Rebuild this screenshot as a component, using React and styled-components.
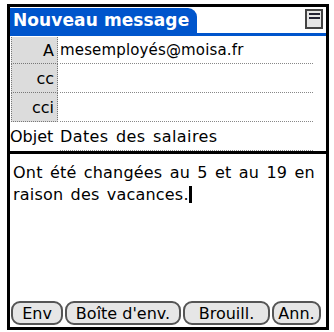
import React from "react"
import styled, { createGlobalStyle } from 'styled-components'

const GlobalStyle = createGlobalStyle`
    body {
        margin: 0;
        background: white;
        font-family: 'DejaVu Sans', 'Liberation Sans', sans-serif;
    }
`

const Screen = styled.div`
    box-sizing: border-box;
    width: 322px;
    height: 326px;
    margin: 4px 0 0 7px;
    border: 3px solid black;
    display: flex;
    flex-direction: column;
    background: white;
`

const TitleRow = styled.div`
    display: flex;
    align-items: flex-end;
    height: 26px;
    border-bottom: 3px solid #0055cc;
`

const TitleTab = styled.div`
    height: 25px;
    line-height: 25px;
    background: #0055cc;
    color: white;
    font-weight: bold;
    font-size: 17px;
    letter-spacing: 0.1px;
    padding: 0 8px 0 3px;
    border-top-right-radius: 9px;
`

const MenuIcon = styled.svg`
    margin: 0 3px 4px auto;
`

const Fields = styled.div`
    display: flex;
    flex-direction: column;
    padding-top: 1px;
`

const Row = styled.div`
    display: grid;
    grid-template-columns: 48px 1fr;
    height: ${p => p.$h || 29}px;
    font-size: ${p => p.$fs || 15}px;
    letter-spacing: ${p => p.$ls || 0}px;
    word-spacing: ${p => p.$ws || 0}px;
`

const Label = styled.div`
    box-sizing: border-box;
    display: flex;
    align-items: center;
    justify-content: ${p => p.$plain ? 'flex-start' : 'flex-end'};
    padding: 0 ${p => p.$plain ? 0 : 3}px;
    background: ${p => p.$plain ? 'white' : '#dcdcdc'};
    border: ${p => p.$plain ? 'none' : '1px dotted #777'};
    border-top: none;
    margin-left: ${p => p.$plain ? 0 : 1}px;
    letter-spacing: 0;
    font-size: 16px;
`

const Value = styled.div`
    display: flex;
    align-items: center;
    margin: 0 13px 0 2px;
    border-bottom: 1px dotted #888;
`

const Divider = styled.div`
    height: 3px;
    background: black;
`

const Body = styled.div`
    padding: 8px 3px 0;
    font-size: 16px;
    letter-spacing: 0.2px;
    word-spacing: 2px;
    line-height: 22px;
    flex: 1;
`

const Caret = styled.span`
    display: inline-block;
    width: 3px;
    height: 17px;
    background: black;
    vertical-align: -3px;
`

const Buttons = styled.div`
    display: flex;
    gap: 2px;
    padding: 0 0 2px 1px;
`

const Button = styled.div`
    box-sizing: border-box;
    height: 24px;
    width: ${p => p.$w}px;
    border: 2px solid #555;
    border-radius: 9px;
    background: #e6e6e6;
    font-size: 16px;
    display: flex;
    align-items: center;
    justify-content: center;
`

function App() {
    return (
        <>
            <GlobalStyle />
            <Screen>
                <TitleRow>
                    <TitleTab>Nouveau message</TitleTab>
                    <MenuIcon width="18" height="20" viewBox="0 0 18 20">
                        <rect x="1" y="1" width="16" height="18" fill="#e6e6e6" stroke="#444" strokeWidth="2" />
                        <rect x="4" y="4" width="11" height="2" fill="#223" />
                        <rect x="4" y="8" width="11" height="2" fill="#223" />
                    </MenuIcon>
                </TitleRow>
                <Fields>
                    <Row $h={27} $ls={0.15}>
                        <Label>A</Label>
                        <Value>mesemployés@moisa.fr</Value>
                    </Row>
                    <Row>
                        <Label>cc</Label>
                        <Value></Value>
                    </Row>
                    <Row>
                        <Label>cci</Label>
                        <Value></Value>
                    </Row>
                    <Row $fs={16} $ls={0.4} $ws={2}>
                        <Label $plain>Objet</Label>
                        <Value>Dates des salaires</Value>
                    </Row>
                </Fields>
                <Divider />
                <Body>
                    Ont été changées au 5 et au 19 en raison des vacances.<Caret />
                </Body>
                <Buttons>
                    <Button $w={52}>Env</Button>
                    <Button $w={116}>Boîte d'env.</Button>
                    <Button $w={87}>Brouill.</Button>
                    <Button $w={49}>Ann.</Button>
                </Buttons>
            </Screen>
        </>
    )
}

export default App
